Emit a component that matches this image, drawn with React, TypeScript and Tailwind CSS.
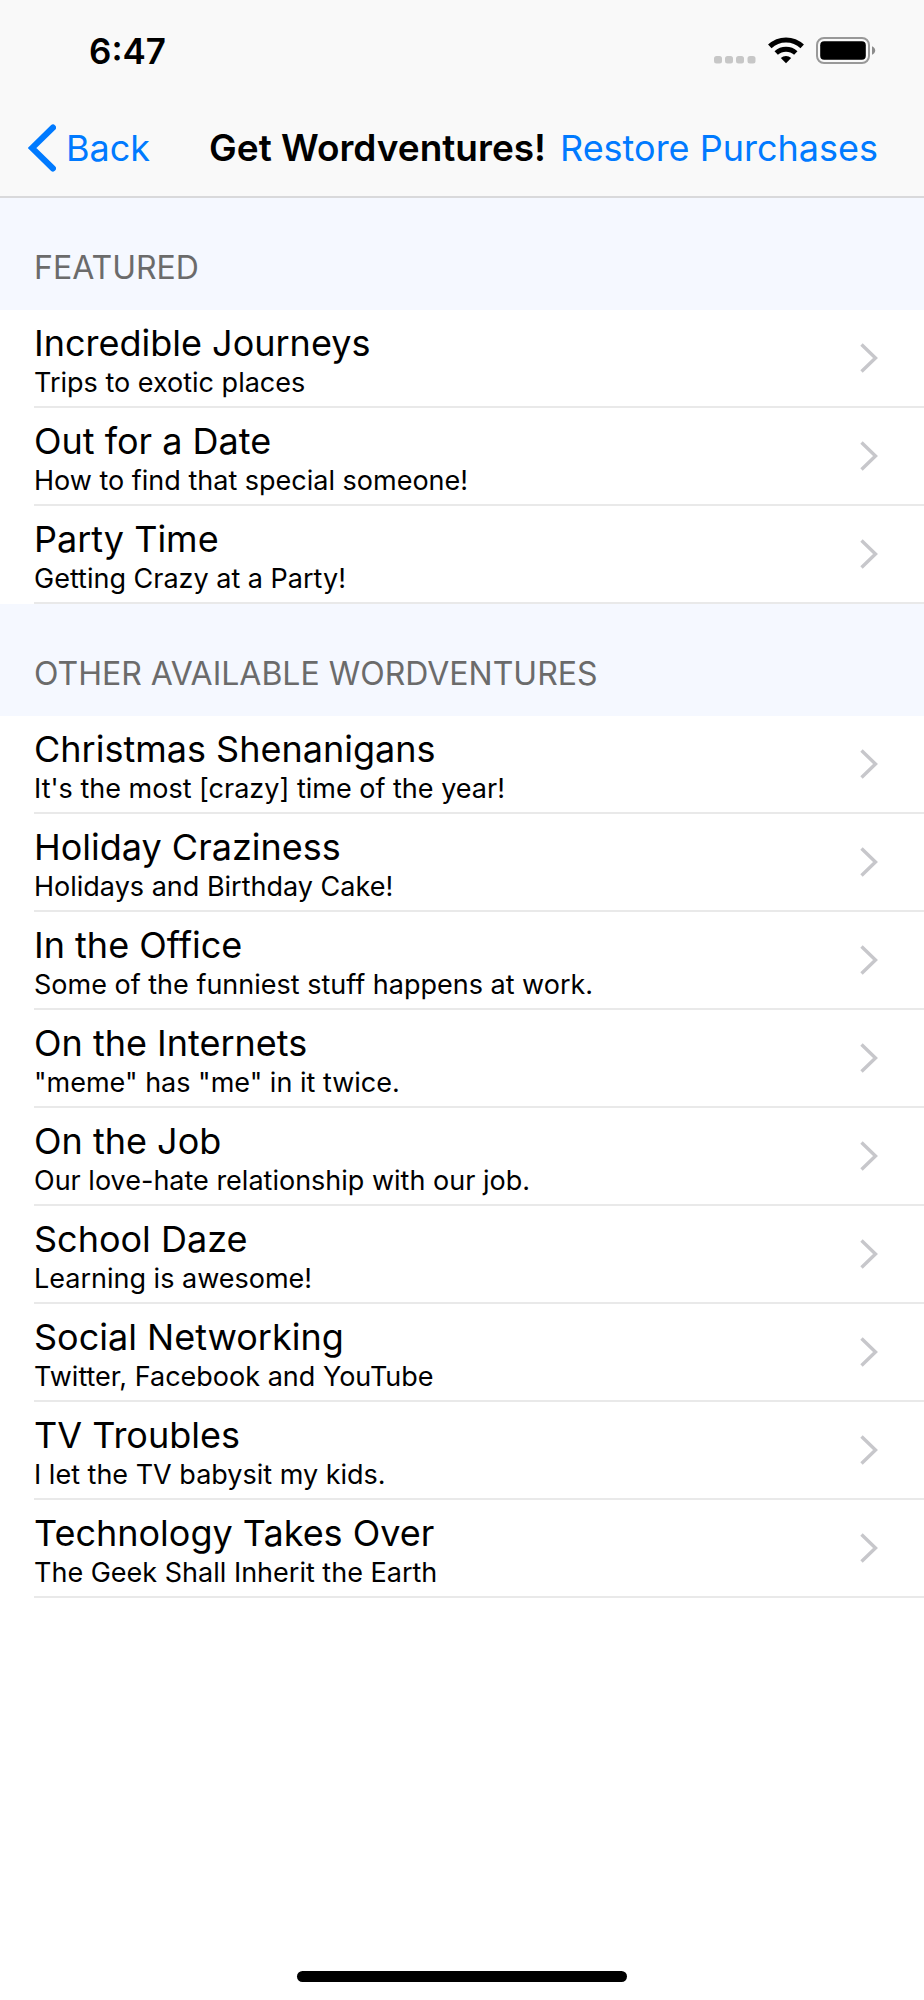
type Wordventure = {
  title: string
  blurb: string
}

const featured: Wordventure[] = [
  { title: 'Incredible Journeys', blurb: 'Trips to exotic places' },
  { title: 'Out for a Date', blurb: 'How to find that special someone!' },
  { title: 'Party Time', blurb: 'Getting Crazy at a Party!' },
]

const others: Wordventure[] = [
  { title: 'Christmas Shenanigans', blurb: "It's the most [crazy] time of the year!" },
  { title: 'Holiday Craziness', blurb: 'Holidays and Birthday Cake!' },
  { title: 'In the Office', blurb: 'Some of the funniest stuff happens at work.' },
  { title: 'On the Internets', blurb: '"meme" has "me" in it twice.' },
  { title: 'On the Job', blurb: 'Our love-hate relationship with our job.' },
  { title: 'School Daze', blurb: 'Learning is awesome!' },
  { title: 'Social Networking', blurb: 'Twitter, Facebook and YouTube' },
  { title: 'TV Troubles', blurb: 'I let the TV babysit my kids.' },
  { title: 'Technology Takes Over', blurb: 'The Geek Shall Inherit the Earth' },
]

function SignalIcon() {
  return (
    <svg width="42" height="27" viewBox="0 0 42 27" fill="#c7c7c7" aria-hidden="true">
      <rect x="0" y="19" width="8" height="7.5" rx="2.5" />
      <rect x="11" y="19" width="8" height="7.5" rx="2.5" />
      <rect x="22" y="19" width="8" height="7.5" rx="2.5" />
      <rect x="33.5" y="19" width="8" height="7.5" rx="2.5" />
    </svg>
  )
}

function WifiIcon() {
  return (
    <svg width="36" height="27" viewBox="0 0 36 27" fill="none" stroke="#000" aria-hidden="true">
      <path d="M1.8 9.4C10.9 0.7 25.1 0.7 34.2 9.4" strokeWidth="5" />
      <path d="M8.2 16C13.8 10.9 22.2 10.9 27.8 16" strokeWidth="5" />
      <path d="M12.8 21.1C15.8 18.4 20.2 18.4 23.2 21.1L18 26.2Z" fill="#000" stroke="none" />
    </svg>
  )
}

function BatteryIcon() {
  return (
    <svg width="60" height="27" viewBox="0 0 60 27" fill="none" aria-hidden="true">
      <rect x="1" y="1" width="52" height="25" rx="7" stroke="#999" strokeWidth="2" />
      <rect x="4.2" y="4.2" width="45.6" height="18.6" rx="4" fill="#000" />
      <path d="M56 9.2C58 10 59.2 11.6 59.2 13.5S58 17 56 17.8Z" fill="#8c8c8c" />
    </svg>
  )
}

function Section({ heading, items }: { heading: string; items: Wordventure[] }) {
  return (
    <section>
      <h2 className="flex h-28 items-end bg-[#f5f8ff] px-[34px] pb-[22px] text-[32px] leading-10 text-[#6b6b6b] uppercase">
        {heading}
      </h2>
      <ul className="pl-[34px]">
        {items.map((item) => (
          <li key={item.title} className="border-b-2 border-[#e9e9e9]">
            <a href="#" className="flex h-24 items-center justify-between pr-[46px]">
              <span className="flex flex-col self-start pt-3">
                <span className="text-[36px] leading-[42px]">{item.title}</span>
                <span className="text-[27px] leading-[38px]">{item.blurb}</span>
              </span>
              <svg width="18" height="30" viewBox="0 0 18 30" fill="none" aria-hidden="true">
                <path d="M1.5 1.5L15.5 15L1.5 28.5" stroke="#c7c7cb" strokeWidth="3.4" />
              </svg>
            </a>
          </li>
        ))}
      </ul>
    </section>
  )
}

export default function App() {
  return (
    <div className="flex min-h-screen flex-col bg-white font-[Inter,sans-serif] text-black">
      <header className="border-b-2 border-[#d9d9db] bg-[#f9f9f9]">
        {/* Status bar */}
        <div className="flex h-[101px] items-center justify-between pr-12 pl-[89px]">
          <span className="text-[35px] leading-10 font-semibold">6:47</span>
          <div className="flex items-center gap-3">
            <SignalIcon />
            <WifiIcon />
            <BatteryIcon />
          </div>
        </div>

        {/* Navigation bar */}
        <nav className="flex h-[95px] items-center justify-between pr-[46px] pb-[2px] pl-7 text-[36px] leading-[46px] whitespace-nowrap">
          <button type="button" className="flex items-center gap-[10px] text-[#007aff]">
            <svg width="28" height="48" viewBox="0 0 28 48" fill="none" aria-hidden="true">
              <path d="M25 3.5L4 24L25 44.5" stroke="#007aff" strokeWidth="6" strokeLinecap="round" />
            </svg>
            Back
          </button>
          <div className="flex items-center gap-[14px]">
            <h1 className="text-[37px] font-semibold">Get Wordventures!</h1>
            <button type="button" className="text-[#007aff]">
              Restore Purchases
            </button>
          </div>
        </nav>
      </header>

      <main>
        <Section heading="Featured" items={featured} />
        <Section heading="Other Available Wordventures" items={others} />
      </main>

      {/* Home indicator */}
      <div className="mt-auto flex justify-center pt-8 pb-[18px]">
        <div className="h-[11px] w-[330px] rounded-full bg-black" />
      </div>
    </div>
  )
}
